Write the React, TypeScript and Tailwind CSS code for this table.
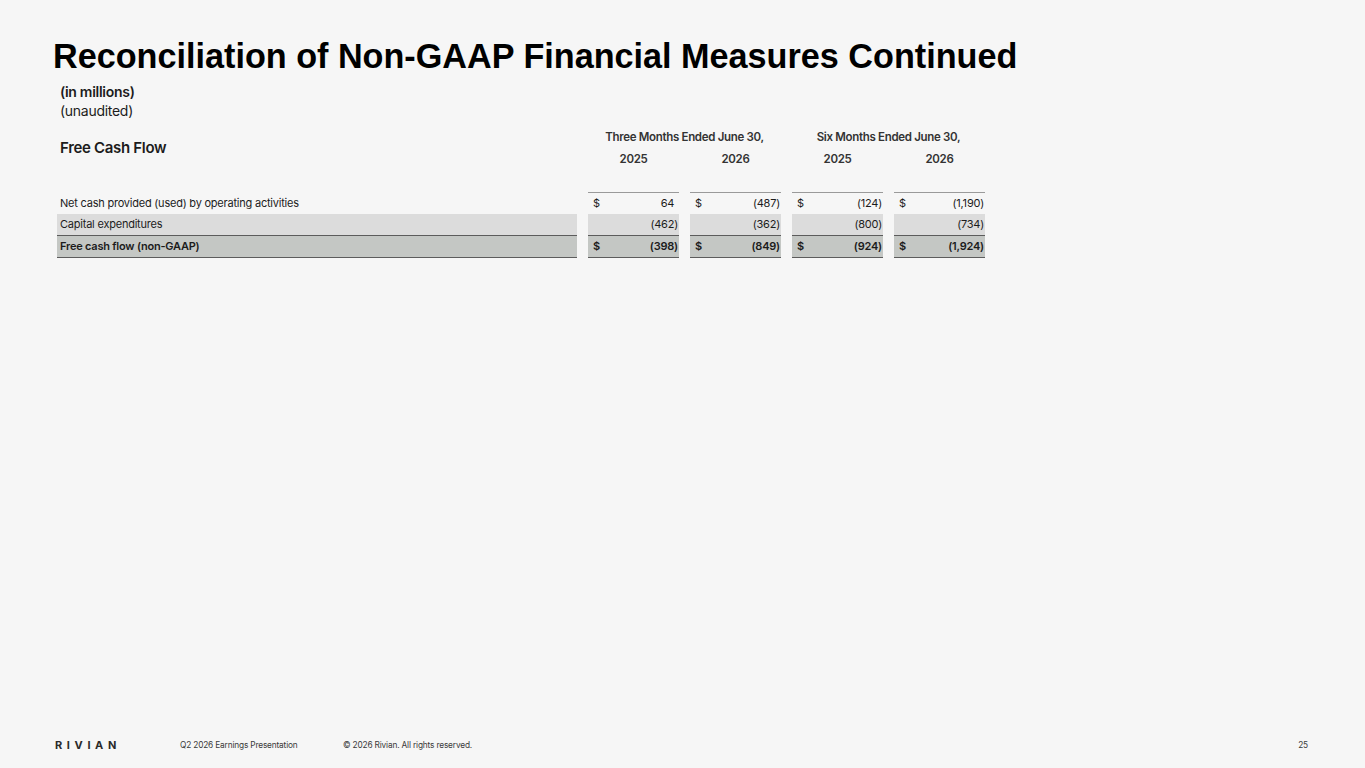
import React from 'react';

type Row = {
  label: string;
  values: string[];
  dollar: boolean;
  kind: 'plain' | 'shaded' | 'total';
};

const rows: Row[] = [
  {
    label: 'Net cash provided (used) by operating activities',
    values: ['64', '(487)', '(124)', '(1,190)'],
    dollar: true,
    kind: 'plain',
  },
  {
    label: 'Capital expenditures',
    values: ['(462)', '(362)', '(800)', '(734)'],
    dollar: false,
    kind: 'shaded',
  },
  {
    label: 'Free cash flow (non-GAAP)',
    values: ['(398)', '(849)', '(924)', '(1,924)'],
    dollar: true,
    kind: 'total',
  },
];

const rowStyle = {
  plain: 'bg-transparent font-normal',
  shaded: 'bg-[#dcdcdc] border-b border-[#5c5c5c] font-normal',
  total: 'bg-[#c4c7c4] border-b border-[#5c5c5c] font-semibold',
};

const Value: React.FC<{ v: string }> = ({ v }) => {
  const neg = v.startsWith('(');
  return (
    <span>
      {v}
      {!neg && <span className="invisible">)</span>}
    </span>
  );
};

const App: React.FC = () => {
  return (
    <div className="w-full h-[768px] bg-[#f6f6f6] text-[#1c1c1c] flex flex-col font-['Inter',sans-serif] overflow-hidden">
      <h1 className="pt-[39px] pl-[53px] text-[34.2px] leading-none font-bold text-black font-['Liberation_Sans',Arial,sans-serif]">
        Reconciliation of Non-GAAP Financial Measures Continued
      </h1>

      <div className="pl-[60px] mt-[9px] text-[14px] leading-[19px] tracking-[-0.02em]">
        <div className="font-semibold">(in millions)</div>
        <div>(unaudited)</div>
      </div>

      {/* Free cash flow table */}
      <div className="pl-[57px] mt-[6px]">
        <div className="grid grid-cols-[520px_91px_91px_91px_91px] gap-x-[11px] text-[#333] tracking-[-0.02em]">
          <div className="row-span-2 self-center pl-[3px] text-[15px] font-semibold text-[#1c1c1c]">
            Free Cash Flow
          </div>
          <div className="col-span-2 text-center text-[11.5px] font-semibold leading-[22px]">
            Three Months Ended June 30,
          </div>
          <div className="col-span-2 text-center text-[11.5px] font-semibold leading-[22px]">
            Six Months Ended June 30,
          </div>
          {['2025', '2026', '2025', '2026'].map((y, i) => (
            <div key={i} className="text-center text-[11.5px] font-semibold leading-[22px]">
              {y}
            </div>
          ))}
        </div>

        <div className="mt-[22px] grid grid-cols-[520px_91px_91px_91px_91px] gap-x-[11px] text-[11px] tracking-[-0.02em]">
          {rows.map((row) => (
            <React.Fragment key={row.label}>
              <div
                className={`h-[22px] flex items-center pl-[3px] ${rowStyle[row.kind]} ${
                  row.kind === 'plain' ? 'border-t border-transparent' : ''
                }`}
              >
                {row.label}
              </div>
              {row.values.map((v, i) => (
                <div
                  key={i}
                  className={`h-[22px] flex items-center justify-between pl-[5px] pr-[1px] ${rowStyle[row.kind]} ${
                    row.kind === 'plain' ? 'border-t border-[#9a9a9a]' : ''
                  }`}
                >
                  <span>{row.dollar ? '$' : ''}</span>
                  <Value v={v} />
                </div>
              ))}
            </React.Fragment>
          ))}
        </div>
      </div>

      <div className="mt-auto mb-[15px] flex items-center text-[8.3px] text-[#3a3a3a] tracking-[-0.02em]">
        <div className="pl-[55px] w-[180px] text-[11px] font-bold tracking-[0.42em] text-[#2a2a2a]">RIVIAN</div>
        <div className="w-[163px]">Q2 2026 Earnings Presentation</div>
        <div>© 2026 Rivian. All rights reserved.</div>
        <div className="ml-auto pr-[57px]">25</div>
      </div>
    </div>
  );
};

export default App;
